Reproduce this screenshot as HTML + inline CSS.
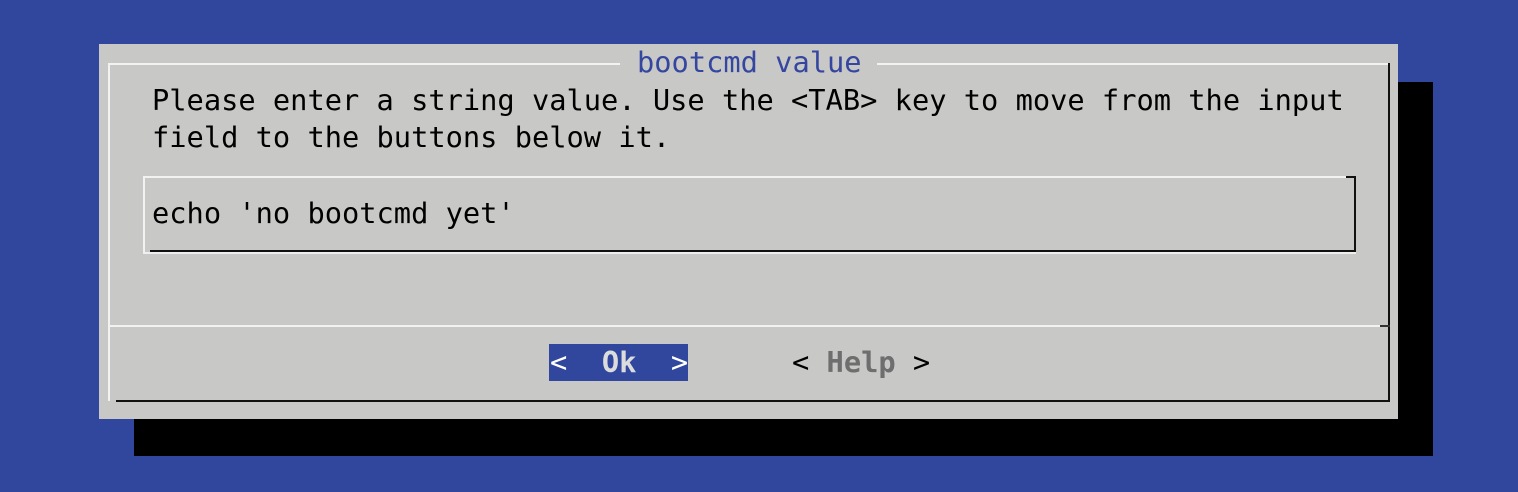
<!DOCTYPE html>
<html><head><meta charset="utf-8"><style>
html,body{margin:0;padding:0;}
body{width:1518px;height:492px;background:#31479e;position:relative;overflow:hidden;font-family:"DejaVu Sans Mono","Liberation Mono",monospace;font-size:28.7px;}
.a{position:absolute;}
.t{position:absolute;white-space:pre;line-height:37px;color:#000;}
</style></head><body>
<div class="a" style="left:134px;top:82px;width:1299px;height:374px;background:#000"></div>
<div class="a" style="left:99px;top:44px;width:1299px;height:375px;background:#c8c8c6"></div>
<div class="a" style="left:108px;top:63px;width:1282px;height:2px;background:#f2f2f2"></div>
<div class="a" style="left:108px;top:63px;width:2px;height:338px;background:#f2f2f2"></div>
<div class="a" style="left:1388px;top:63px;width:2px;height:339px;background:#111"></div>
<div class="a" style="left:116px;top:400px;width:1274px;height:2px;background:#111"></div>
<div class="a" style="left:620px;top:50px;width:257px;height:30px;background:#c8c8c6"></div>
<div class="t" style="left:637px;top:44px;color:#3446a0">bootcmd value</div>
<div class="t" style="left:152px;top:82px">Please enter a string value. Use the &lt;TAB&gt; key to move from the input</div>
<div class="t" style="left:152px;top:119px">field to the buttons below it.</div>
<div class="a" style="left:143px;top:176px;width:1204px;height:2px;background:#f2f2f2"></div>
<div class="a" style="left:143px;top:176px;width:2px;height:76px;background:#f2f2f2"></div>
<div class="a" style="left:1346px;top:176px;width:10px;height:2px;background:#111"></div>
<div class="a" style="left:1354px;top:176px;width:2px;height:76px;background:#111"></div>
<div class="a" style="left:150px;top:250px;width:1206px;height:2px;background:#111"></div>
<div class="a" style="left:143px;top:252px;width:1213px;height:2px;background:#efefef"></div>
<div class="t" style="left:152px;top:195px">echo 'no bootcmd yet'</div>
<div class="a" style="left:108px;top:325px;width:1272px;height:2px;background:#f2f2f2"></div>
<div class="a" style="left:1380px;top:325px;width:10px;height:2px;background:#333"></div>
<div class="a" style="left:549px;top:344px;width:139px;height:37px;background:#31479e"></div>
<div class="t" style="left:550px;top:344px;color:#fff">&lt;  <b style="color:#dcdcdc">Ok</b>  &gt;</div>
<div class="t" style="left:792px;top:344px">&lt; <b style="color:#6e6e6e">Help</b> &gt;</div>
</body></html>
